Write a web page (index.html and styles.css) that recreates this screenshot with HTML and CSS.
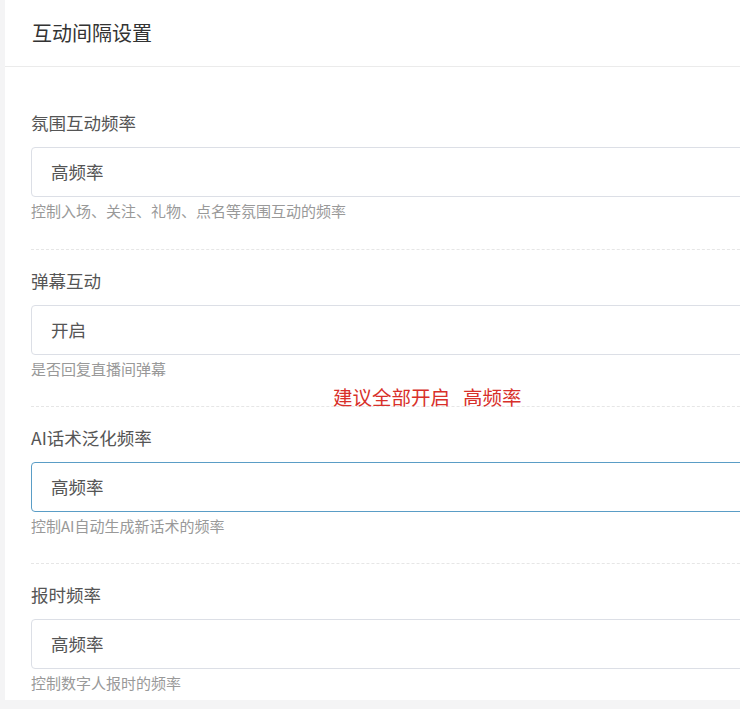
FILE: index.html
```html
<!DOCTYPE html>
<html lang="zh-CN">
<head>
<meta charset="utf-8">
<title>互动间隔设置</title>
<link rel="stylesheet" href="styles.css">
</head>
<body>
<div class="page">
  <div class="card">
    <div class="card-header">互动间隔设置</div>
    <div class="card-body">
      <div class="form-item">
        <div class="label">氛围互动频率</div>
        <div class="input">高频率</div>
        <div class="help">控制入场、关注、礼物、点名等氛围互动的频率</div>
      </div>
      <div class="form-item">
        <div class="label">弹幕互动</div>
        <div class="input">开启</div>
        <div class="help">是否回复直播间弹幕</div>
      </div>
      <div class="form-item">
        <div class="label">AI话术泛化频率</div>
        <div class="input is-focus">高频率</div>
        <div class="help">控制AI自动生成新话术的频率</div>
      </div>
      <div class="form-item">
        <div class="label">报时频率</div>
        <div class="input">高频率</div>
        <div class="help">控制数字人报时的频率</div>
      </div>
    </div>
    <div class="note"><span>建议全部开启</span><span>高频率</span></div>
  </div>
</div>
</body>
</html>
```
FILE: styles.css
```css
html, body {
  margin: 0;
  padding: 0;
}
body {
  background: #f4f4f5;
  font-family: "Noto Sans CJK SC", "Microsoft YaHei", sans-serif;
  height: 709px;
  overflow: hidden;
}
.page {
  padding-left: 5px;
  height: 700px;
  overflow: hidden;
}
.card {
  position: relative;
  background: #fff;
  height: 700px;
  width: 800px;
  overflow: hidden;
}
.card-header {
  height: 66px;
  line-height: 65px;
  padding-left: 27px;
  font-size: 20px;
  color: #333;
  border-bottom: 1px solid #ebebeb;
}
.card-body {
  padding: 25px 0 0 26px;
}
.form-item {
  padding: 19px 0 27px;
  border-bottom: 1px dashed #e6e6e6;
}
.form-item:first-child {
  padding-bottom: 28px;
}
.form-item:last-child {
  border-bottom: none;
}
.label {
  font-size: 17.5px;
  line-height: 24px;
  color: #555;
  margin-bottom: 12px;
}
.input {
  box-sizing: border-box;
  height: 50px;
  line-height: 48px;
  border: 1px solid #dcdfe6;
  border-radius: 4px;
  padding-left: 19px;
  font-size: 17.5px;
  color: #555;
}
.input.is-focus {
  border-color: #5a9dc6;
}
.help {
  margin-top: 4px;
  font-size: 15px;
  line-height: 20px;
  color: #999;
}
.note {
  position: absolute;
  left: 328px;
  top: 385px;
  display: flex;
  gap: 13px;
  font-size: 19.5px;
  line-height: 24px;
  color: #d8302a;
}
```
